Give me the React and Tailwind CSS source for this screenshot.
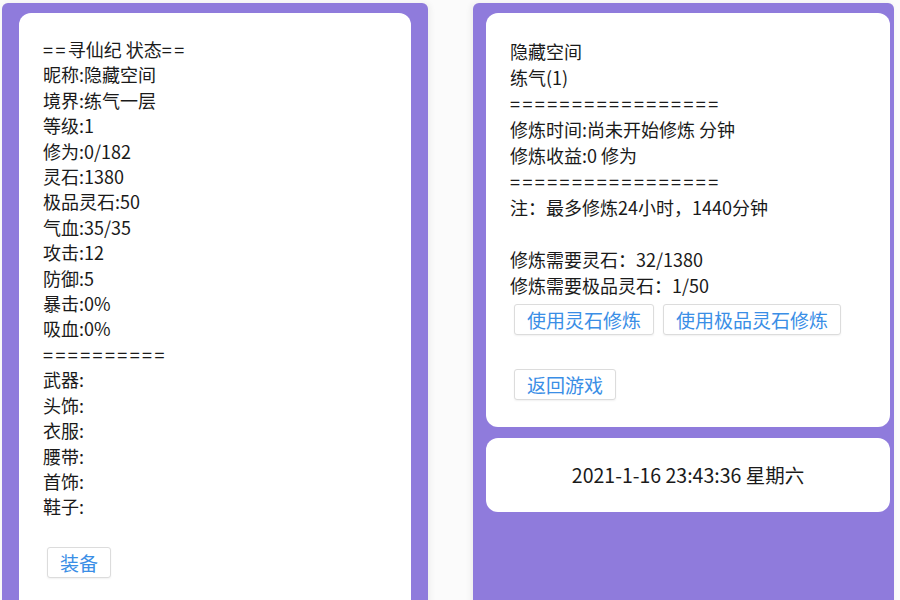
const statusLines = [
  '==寻仙纪 状态==',
  '昵称:隐藏空间',
  '境界:练气一层',
  '等级:1',
  '修为:0/182',
  '灵石:1380',
  '极品灵石:50',
  '气血:35/35',
  '攻击:12',
  '防御:5',
  '暴击:0%',
  '吸血:0%',
  '==========',
  '武器:',
  '头饰:',
  '衣服:',
  '腰带:',
  '首饰:',
  '鞋子:',
]

const trainLines = [
  '隐藏空间',
  '练气(1)',
  '=================',
  '修炼时间:尚未开始修炼 分钟',
  '修炼收益:0 修为',
  '=================',
  '注：最多修炼24小时，1440分钟',
  '\u00a0',
  '修炼需要灵石：32/1380',
  '修炼需要极品灵石：1/50',
]

// the "=" signs are wider in the original font, so space them out
const Line = ({ text }) => (
  <div>
    {text.split(/(=+)/).map((part, i) =>
      part.startsWith('=') ? (
        <span key={i} className="tracking-[2.4px]">{part}</span>
      ) : (
        <span key={i}>{part}</span>
      )
    )}
  </div>
)

const Btn = ({ children }) => (
  <button className="h-[31px] px-3 flex items-center bg-white border border-[#dcdcdc] rounded-[3px] shadow-[0_1px_2px_rgba(0,0,0,0.06)] text-[19px] leading-none text-[#3a8ee6]">
    {children}
  </button>
)

export default function App() {
  return (
    <div className="h-[600px] overflow-hidden bg-[#fbfbfb] flex pt-[3px] pl-[2px] font-['Noto_Sans_CJK_SC','Microsoft_YaHei',sans-serif] text-[#1a1a1a]">

      {/* ===== 状态 ===== */}
      <div className="w-[426px] h-[640px] shrink-0 bg-[#8f7bdc] rounded-t-[6px] pt-[10px] px-[17px] shadow-[2px_0_6px_rgba(0,0,0,0.06)]">
        <div className="h-[620px] bg-white rounded-[12px] pt-[24px] px-6 text-[18px] leading-[25.4px]">
          {statusLines.map((line, i) => (
            <Line key={i} text={line} />
          ))}
          <div className="mt-[27px] ml-1 flex">
            <Btn>装备</Btn>
          </div>
        </div>
      </div>

      {/* ===== 修炼 ===== */}
      <div className="w-[421px] h-[640px] shrink-0 ml-[45px] bg-[#8f7bdc] rounded-t-[6px] pt-[10px] pl-[13px] pr-[4px] shadow-[-2px_0_6px_rgba(0,0,0,0.06)]">
        <div className="bg-white rounded-[12px] pt-[24.6px] pb-[27px] px-6 text-[18px] leading-[26.1px]">
          {trainLines.map((line, i) => (
            <Line key={i} text={line} />
          ))}
          <div className="mt-[5px] ml-1 flex gap-[9px]">
            <Btn>使用灵石修炼</Btn>
            <Btn>使用极品灵石修炼</Btn>
          </div>
          <div className="mt-[34px] ml-1 flex">
            <Btn>返回游戏</Btn>
          </div>
        </div>

        <div className="mt-[11px] h-[74px] bg-white rounded-[12px] flex items-center justify-center text-[19.5px]">
          2021-1-16 23:43:36 星期六
        </div>
      </div>

    </div>
  )
}
